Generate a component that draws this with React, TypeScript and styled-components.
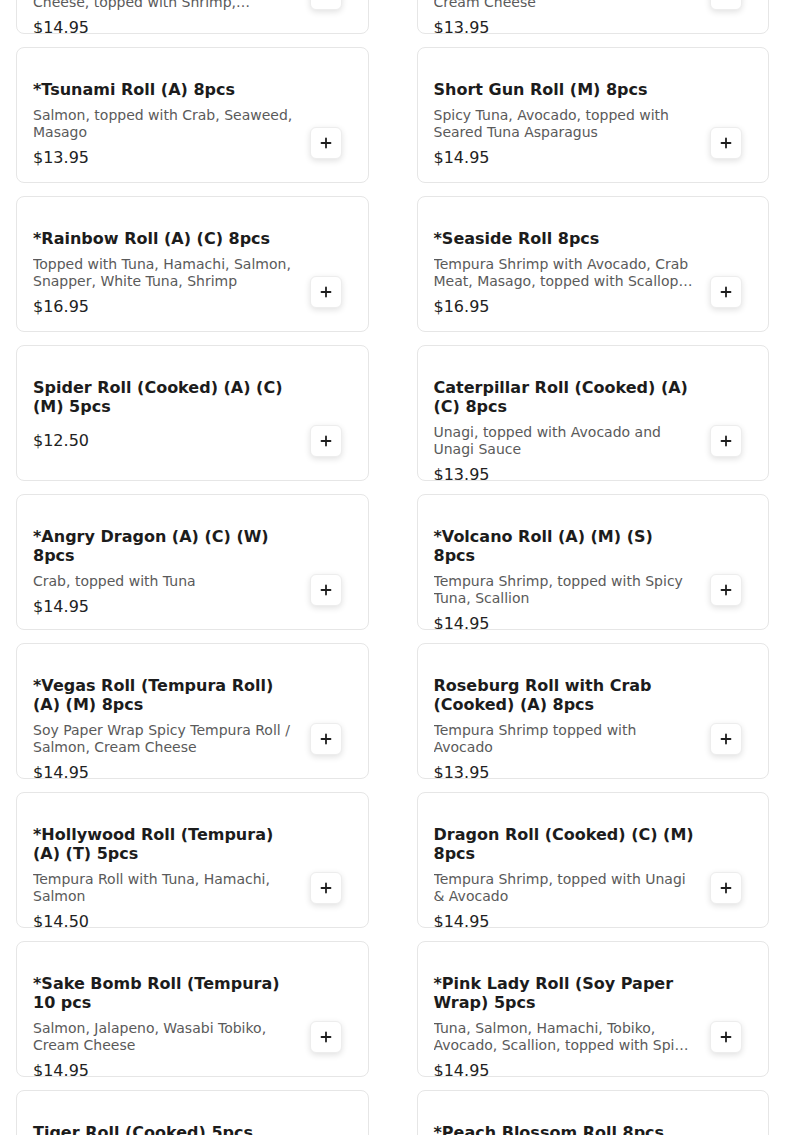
import styled, { createGlobalStyle } from "styled-components";

const GlobalStyle = createGlobalStyle`
  * { box-sizing: border-box; }
  html, body {
    margin: 0;
    padding: 0;
    background: #ffffff;
    font-family: "DejaVu Sans", "Noto Sans", sans-serif;
    overflow: hidden;
  }
`;

interface MenuItem {
  name: string;
  description?: string;
  price: string;
}

const items: MenuItem[] = [
  {
    name: "*Crunch Shrimp Roll (Tempura) (C) 8pcs",
    description: "Tempura Shrimp, Avocado, Cream Cheese, topped with Shrimp, Avocado and Eel Sauce",
    price: "$14.95",
  },
  {
    name: "*Alaska Roll (Cooked) (A) (M) 8pcs",
    description: "Salmon, Tuna, Avocado, Cucumber, Cream Cheese",
    price: "$13.95",
  },
  {
    name: "*Tsunami Roll (A) 8pcs",
    description: "Salmon, topped with Crab, Seaweed, Masago",
    price: "$13.95",
  },
  {
    name: "Short Gun Roll (M) 8pcs",
    description: "Spicy Tuna, Avocado, topped with Seared Tuna Asparagus",
    price: "$14.95",
  },
  {
    name: "*Rainbow Roll (A) (C) 8pcs",
    description: "Topped with Tuna, Hamachi, Salmon, Snapper, White Tuna, Shrimp",
    price: "$16.95",
  },
  {
    name: "*Seaside Roll 8pcs",
    description: "Tempura Shrimp with Avocado, Crab Meat, Masago, topped with Scallop and Spicy Mayo",
    price: "$16.95",
  },
  {
    name: "Spider Roll (Cooked) (A) (C) (M) 5pcs",
    price: "$12.50",
  },
  {
    name: "Caterpillar Roll (Cooked) (A) (C) 8pcs",
    description: "Unagi, topped with Avocado and Unagi Sauce",
    price: "$13.95",
  },
  {
    name: "*Angry Dragon (A) (C) (W) 8pcs",
    description: "Crab, topped with Tuna",
    price: "$14.95",
  },
  {
    name: "*Volcano Roll (A) (M) (S) 8pcs",
    description: "Tempura Shrimp, topped with Spicy Tuna, Scallion",
    price: "$14.95",
  },
  {
    name: "*Vegas Roll (Tempura Roll) (A) (M) 8pcs",
    description: "Soy Paper Wrap Spicy Tempura Roll / Salmon, Cream Cheese",
    price: "$14.95",
  },
  {
    name: "Roseburg Roll with Crab (Cooked) (A) 8pcs",
    description: "Tempura Shrimp topped with Avocado",
    price: "$13.95",
  },
  {
    name: "*Hollywood Roll (Tempura) (A) (T) 5pcs",
    description: "Tempura Roll with Tuna, Hamachi, Salmon",
    price: "$14.50",
  },
  {
    name: "Dragon Roll (Cooked) (C) (M) 8pcs",
    description: "Tempura Shrimp, topped with Unagi & Avocado",
    price: "$14.95",
  },
  {
    name: "*Sake Bomb Roll (Tempura) 10 pcs",
    description: "Salmon, Jalapeno, Wasabi Tobiko, Cream Cheese",
    price: "$14.95",
  },
  {
    name: "*Pink Lady Roll (Soy Paper Wrap) 5pcs",
    description: "Tuna, Salmon, Hamachi, Tobiko, Avocado, Scallion, topped with Spicy Tuna and Eel Sauce",
    price: "$14.95",
  },
  {
    name: "Tiger Roll (Cooked) 5pcs",
    description: "Shrimp Tempura, Avocado, topped with Shrimp",
    price: "$13.95",
  },
  {
    name: "*Peach Blossom Roll 8pcs",
    description: "Salmon, Avocado, topped with Tuna",
    price: "$14.95",
  },
];

const Page = styled.main`
  width: 100%;
  height: 1135px;
  overflow: hidden;
`;

// the list is shown scrolled: the first row sits partly above the viewport
const MenuGrid = styled.section`
  display: grid;
  grid-template-columns: 1fr 1fr;
  column-gap: 48px;
  row-gap: 13px;
  padding: 0 16px;
  margin-top: -102px;
`;

const Card = styled.article`
  height: 136px;
  overflow: hidden;
  display: flex;
  align-items: flex-start;
  gap: 14px;
  padding: 32px 26px 16px 16px;
  background: #ffffff;
  border: 1px solid #e6e6e6;
  border-radius: 8px;
`;

const Info = styled.div`
  flex: 1;
  min-width: 0;
  display: flex;
  flex-direction: column;
  gap: 7.5px;
`;

const Name = styled.h3`
  margin: 0;
  font-size: 16px;
  line-height: 19px;
  font-weight: 700;
  color: #1c1c1c;
`;

const Description = styled.p`
  margin: 0;
  font-size: 14px;
  line-height: 17px;
  color: #5a5a5a;
  display: -webkit-box;
  -webkit-line-clamp: 2;
  -webkit-box-orient: vertical;
  overflow: hidden;
`;

const Price = styled.span`
  font-size: 16px;
  line-height: 19px;
  color: #222222;
`;

const AddButton = styled.button`
  flex: none;
  width: 32px;
  height: 32px;
  margin-top: 47px;
  padding: 0;
  display: grid;
  place-items: center;
  background: #ffffff;
  border: 1px solid #ededed;
  border-radius: 6px;
  box-shadow: 0 2px 6px rgba(0, 0, 0, 0.12);
  color: #1e1e1e;
  cursor: pointer;
`;

function PlusIcon() {
  return (
    <svg width="12" height="12" viewBox="0 0 12 12" fill="none">
      <path d="M6 1.5v9M1.5 6h9" stroke="currentColor" strokeWidth="1.8" strokeLinecap="round" />
    </svg>
  );
}

function MenuCard({ item }: { item: MenuItem }) {
  return (
    <Card>
      <Info>
        <Name>{item.name}</Name>
        <Description>{item.description ?? ""}</Description>
        <Price>{item.price}</Price>
      </Info>
      <AddButton type="button" aria-label={`Add ${item.name}`}>
        <PlusIcon />
      </AddButton>
    </Card>
  );
}

export default function App() {
  return (
    <>
      <GlobalStyle />
      <Page>
        <MenuGrid>
          {items.map((item) => (
            <MenuCard key={item.name} item={item} />
          ))}
        </MenuGrid>
      </Page>
    </>
  );
}
